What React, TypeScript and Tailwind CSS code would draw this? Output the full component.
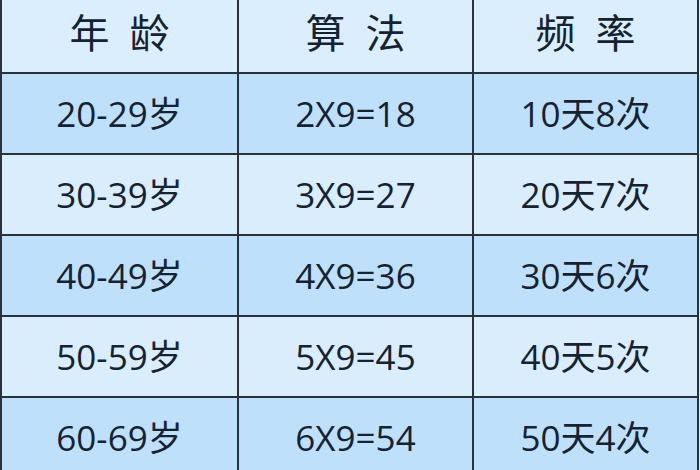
const rows = [
  { age: "20-29岁", calc: "2X9=18", freq: "10天8次" },
  { age: "30-39岁", calc: "3X9=27", freq: "20天7次" },
  { age: "40-49岁", calc: "4X9=36", freq: "30天6次" },
  { age: "50-59岁", calc: "5X9=45", freq: "40天5次" },
  { age: "60-69岁", calc: "6X9=54", freq: "50天4次" },
];

const headers = [
  ["年", "龄"],
  ["算", "法"],
  ["频", "率"],
];

const cols = "grid grid-cols-[235px_2px_233px_2px_223px]";

export default function App() {
  return (
    <div
      className="w-[700px] h-[470px] overflow-hidden bg-[#dbeefd] text-[#152232]"
      style={{ fontFamily: '"Open Sans", "Noto Sans CJK SC", sans-serif' }}
    >
      <div className="w-[699px] border-l-2 border-r-2 border-[#27323c]">
        <div className={`${cols} h-[74px] border-b-2 border-[#27323c] bg-[#dbeefd]`}>
          {headers.map((h, i) => (
            <>
              {i > 0 && <div key={`s${i}`} className="bg-[#27323c]" />}
              <div key={i} className="flex items-center justify-center gap-[20px] pb-[6px] text-[40px] leading-none">
                <span>{h[0]}</span>
                <span>{h[1]}</span>
              </div>
            </>
          ))}
        </div>
        {rows.map((r, i) => (
          <div
            key={r.age}
            className={`${cols} h-[81px] border-b-2 border-[#27323c] ${
              i % 2 === 0 ? "bg-[#bfe0fb]" : "bg-[#d9edfd]"
            }`}
          >
            <div className="flex items-center justify-center text-[35px] leading-none">{r.age}</div>
            <div className="bg-[#27323c]" />
            <div className="flex items-center justify-center text-[35px] leading-none">{r.calc}</div>
            <div className="bg-[#27323c]" />
            <div className="flex items-center justify-center text-[35px] leading-none">{r.freq}</div>
          </div>
        ))}
      </div>
    </div>
  );
}
